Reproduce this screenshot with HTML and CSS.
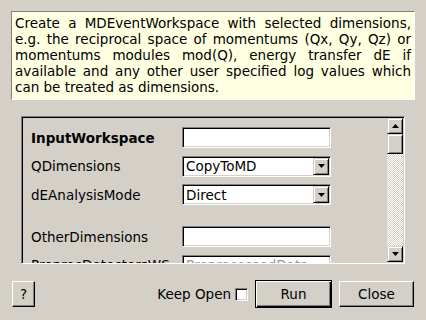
FILE: index.html
```html
<!DOCTYPE html>
<html>
<head>
<meta charset="utf-8">
<link rel="stylesheet" href="styles.css">
</head>
<body>
<div class="dialog">
  <div class="desc">
    <span class="ln">Create a MDEventWorkspace with selected dimensions,</span>
    <span class="ln">e.g. the reciprocal space of momentums (Qx, Qy, Qz) or</span>
    <span class="ln">momentums modules mod(Q), energy transfer dE if</span>
    <span class="ln">available and any other user specified log values which</span>
    <span class="ln last">can be treated as dimensions.</span>
  </div>
  <div class="frame">
    <div class="props">
      <span class="lbl bold">InputWorkspace</span>
      <span class="edit"></span>
      <span class="lbl">QDimensions</span>
      <span class="combo"><span class="val">CopyToMD</span><span class="drop"><svg width="7" height="4" viewBox="0 0 7 4"><polygon points="0,0 7,0 3.5,4" fill="#000"/></svg></span></span>
      <span class="lbl">dEAnalysisMode</span>
      <span class="combo"><span class="val">Direct</span><span class="drop"><svg width="7" height="4" viewBox="0 0 7 4"><polygon points="0,0 7,0 3.5,4" fill="#000"/></svg></span></span>
      <span class="spacer"></span>
      <span class="lbl">OtherDimensions</span>
      <span class="edit"></span>
      <span class="lbl">PreprocDetectorsWS</span>
      <span class="edit"><span class="ph">PreprocessedData</span></span>
    </div>
    <div class="vscroll">
      <span class="sbtn"><svg width="7" height="4" viewBox="0 0 7 4"><polygon points="0,4 7,4 3.5,0" fill="#000"/></svg></span>
      <span class="thumb"></span>
      <span class="trough"></span>
      <span class="sbtn"><svg width="7" height="4" viewBox="0 0 7 4"><polygon points="0,0 7,0 3.5,4" fill="#000"/></svg></span>
    </div>
  </div>
  <div class="buttons">
    <span class="btn help">?</span>
    <span class="grow"></span>
    <span class="keep">Keep Open</span>
    <span class="check"></span>
    <span class="btn run">Run</span>
    <span class="btn close">Close</span>
  </div>
</div>
</body>
</html>
```
FILE: styles.css
```css
* { box-sizing: border-box; }
html, body { margin: 0; padding: 0; }
body {
  width: 426px;
  height: 320px;
  overflow: hidden;
  background: #d4d0c8;
  font-family: "DejaVu Sans", sans-serif;
  font-size: 13.5px;
  color: #000;
}
.dialog {
  display: flex;
  flex-direction: column;
  padding: 11px 11px 0 11px;
}
.desc {
  height: 89px;
  background: #ffffe1;
  border: 1px solid;
  border-color: #808080 #ffffff #ffffff #808080;
  padding: 3px 3px 0 3px;
  line-height: 16px;
}
.ln {
  display: block;
  text-align: justify;
  text-align-last: justify;
}
.ln.last { text-align: left; text-align-last: left; }

.frame {
  margin: 16px 10px 0 10px;
  height: 148px;
  display: flex;
  border: 1px solid;
  border-color: #808080 #ffffff #ffffff #808080;
  box-shadow: inset 1px 1px 0 #000, inset -1px -1px 0 #d4d0c8;
}
.props {
  flex: 1;
  overflow: hidden;
  padding: 10px 0 0 9px;
  display: grid;
  grid-template-columns: 151px 149px;
  row-gap: 7.5px;
  align-items: center;
  align-content: start;
}
.lbl { white-space: nowrap; }
.bold { font-weight: bold; }
.spacer { grid-column: 1 / span 2; height: 6px; }
.edit, .combo {
  height: 21px;
  background: #fff;
  border: 1px solid;
  border-color: #808080 #ffffff #ffffff #808080;
  box-shadow: inset 1px 1px 0 #000, inset -1px -1px 0 #d4d0c8;
  display: flex;
  align-items: center;
  padding: 0 2px 0 3px;
  white-space: nowrap;
  overflow: hidden;
}
.ph { color: #9a9a9a; }
.combo { justify-content: space-between; padding-right: 1px; }
.drop {
  width: 16px;
  height: 17px;
  flex: none;
  background: #d4d0c8;
  border: 1px solid;
  border-color: #d4d0c8 #000 #000 #d4d0c8;
  box-shadow: inset 1px 1px 0 #fff, inset -1px -1px 0 #808080;
  display: flex;
  align-items: center;
  justify-content: center;
}
.vscroll {
  width: 16px;
  margin: 1px 1px 1px 0;
  display: flex;
  flex-direction: column;
}
.sbtn, .thumb {
  flex: none;
  width: 16px;
  height: 16px;
  background: #d4d0c8;
  border: 1px solid;
  border-color: #d4d0c8 #000 #000 #d4d0c8;
  box-shadow: inset 1px 1px 0 #fff, inset -1px -1px 0 #808080;
  display: flex;
  align-items: center;
  justify-content: center;
}
.thumb { height: 20px; }
.trough {
  flex: 1;
  background-color: #d4d0c8;
  background-image: conic-gradient(#ffffff 25%, #d4d0c8 0 50%, #ffffff 0 75%, #d4d0c8 0);
  background-size: 2px 2px;
}

.buttons {
  margin-top: 16px;
  height: 28px;
  display: flex;
  align-items: center;
  padding: 0 1px;
}
.grow { flex: 1; }
.btn {
  height: 26px;
  display: flex;
  align-items: center;
  justify-content: center;
  background: #d4d0c8;
  border: 1px solid;
  border-color: #ffffff #000 #000 #ffffff;
  box-shadow: inset -1px -1px 0 #808080;
}
.help { width: 23px; }
.keep { margin-right: 4px; }
.check {
  width: 13px;
  height: 13px;
  background: #fff;
  border: 1px solid;
  border-color: #808080 #ffffff #ffffff #808080;
  box-shadow: inset 1px 1px 0 #000, inset -1px -1px 0 #d4d0c8;
}
.run {
  width: 77px;
  height: 28px;
  margin-left: 7px;
  border: 1px solid #000;
  box-shadow: inset 1px 1px 0 #fff, inset -1px -1px 0 #000, inset -2px -2px 0 #808080;
}
.close { width: 75px; margin-left: 7px; }
```
